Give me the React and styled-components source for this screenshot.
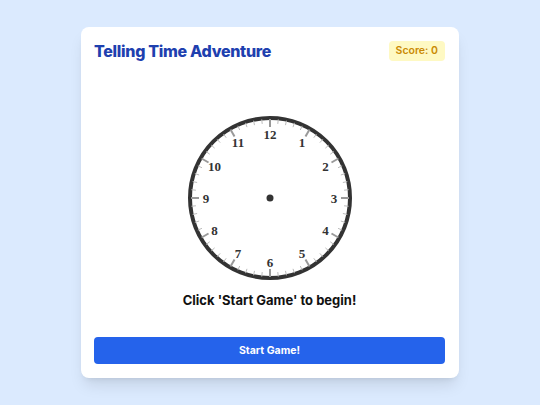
import React from "react";
import styled, { createGlobalStyle } from "styled-components";

const Global = createGlobalStyle`
  html, body { margin: 0; padding: 0; }
  body {
    background: #dbeafe;
    font-family: Inter, "Noto Sans", sans-serif;
    width: 540px;
    height: 405px;
    overflow: hidden;
  }
`;

const Page = styled.div`
  width: 540px;
  height: 405px;
  display: flex;
  justify-content: center;
  padding-top: 27px;
  box-sizing: border-box;
`;

const Card = styled.div`
  width: 378px;
  height: 351px;
  box-sizing: border-box;
  background: #ffffff;
  border-radius: 8px;
  box-shadow: 0 10px 15px -3px rgba(0, 0, 0, 0.1), 0 4px 6px -4px rgba(0, 0, 0, 0.1);
  padding: 13px 14px 14px 13px;
  display: flex;
  flex-direction: column;
`;

const Header = styled.div`
  display: flex;
  justify-content: space-between;
  align-items: center;
  height: 22px;
`;

const Title = styled.h1`
  margin: 0;
  font-size: 16px;
  font-weight: 800;
  color: #1e40af;
  letter-spacing: -0.3px;
`;

const Score = styled.div`
  background: #fef9c3;
  color: #ca8a04;
  font-size: 10.5px;
  font-weight: 600;
  padding: 0 7px;
  height: 20px;
  line-height: 20px;
  border-radius: 4px;
`;

const ClockArea = styled.div`
  display: flex;
  justify-content: center;
  margin-top: 54px;
`;

const Prompt = styled.p`
  margin: 10px 0 0;
  text-align: center;
  font-size: 13px;
  line-height: 20px;
  font-weight: 700;
  color: #111111;
`;

const StartButton = styled.button`
  margin-top: auto;
  height: 27px;
  width: 100%;
  border: none;
  border-radius: 4px;
  background: #2563eb;
  color: #ffffff;
  font-family: Inter, "Noto Sans", sans-serif;
  font-size: 10.5px;
  font-weight: 700;
  cursor: pointer;
`;

function Clock() {
  const c = 82;
  const ticks = [];
  for (let i = 0; i < 60; i++) {
    const a = (i * 6 * Math.PI) / 180;
    const hour = i % 5 === 0;
    const r1 = hour ? 71 : 74.5;
    const r2 = 79;
    ticks.push(
      <line
        key={i}
        x1={c + r1 * Math.sin(a)}
        y1={c - r1 * Math.cos(a)}
        x2={c + r2 * Math.sin(a)}
        y2={c - r2 * Math.cos(a)}
        stroke={hour ? "#999999" : "#bbbbbb"}
        strokeWidth={hour ? 2 : 1}
      />
    );
  }
  const nums = [];
  for (let h = 1; h <= 12; h++) {
    const a = (h * 30 * Math.PI) / 180;
    const r = 64;
    nums.push(
      <text
        key={h}
        x={c + r * Math.sin(a)}
        y={c - r * Math.cos(a)}
        textAnchor="middle"
        dominantBaseline="central"
        fontFamily='"Liberation Serif", "Times New Roman", serif'
        fontWeight="700"
        fontSize="13"
        fill="#333333"
      >
        {h}
      </text>
    );
  }
  return (
    <svg width="164" height="164" viewBox="0 0 164 164">
      <circle cx={c} cy={c} r={80} fill="#ffffff" stroke="#333333" strokeWidth="4" />
      {ticks}
      {nums}
      <circle cx={c} cy={c} r={3.5} fill="#333333" />
    </svg>
  );
}

export default function App() {
  return (
    <>
      <Global />
      <Page>
        <Card>
          <Header>
            <Title>Telling Time Adventure</Title>
            <Score>Score: 0</Score>
          </Header>
          <ClockArea>
            <Clock />
          </ClockArea>
          <Prompt>Click 'Start Game' to begin!</Prompt>
          <StartButton>Start Game!</StartButton>
        </Card>
      </Page>
    </>
  );
}
